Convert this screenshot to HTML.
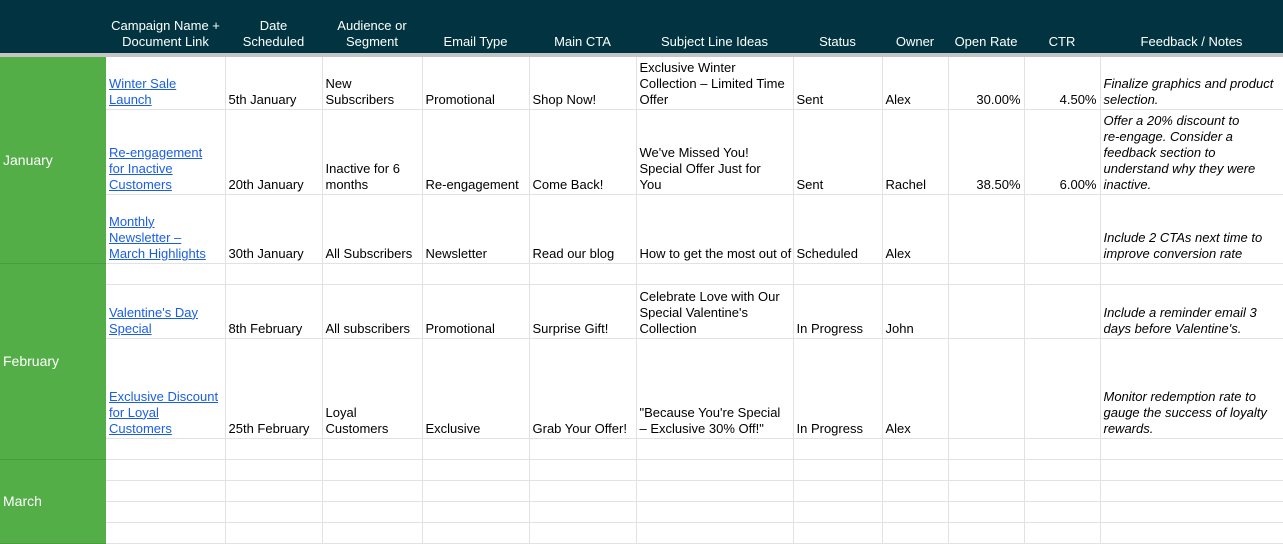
<!DOCTYPE html>
<html><head><meta charset="utf-8"><style>
*{margin:0;padding:0;box-sizing:border-box}
body{width:1283px;height:538px;overflow:hidden;background:#fff;font-family:"Liberation Sans",Arial,sans-serif;font-size:13px;color:#000;position:relative}
.hd{position:absolute;left:0;top:0;width:1283px;height:53px;background:#013440}
.hd div{position:absolute;bottom:3px;color:#fff;text-align:center;line-height:16px;white-space:nowrap}
.gl{position:absolute;left:0;top:53px;width:1283px;height:4px;background:#c4c4c4}
table{position:absolute;left:0;top:57px;border-collapse:collapse;table-layout:fixed;width:1283px}
td{border-right:1px solid #e2e2e2;border-bottom:1px solid #e2e2e2;vertical-align:bottom;padding:0 3px 1px 3px;line-height:16px;overflow:hidden;white-space:nowrap}
td.m{background:#53ae47;color:#fff;vertical-align:middle;padding:0 3px;border-right:none;border-bottom:1px solid #4a9a40;font-size:14px}
a{color:#1a5ee6;text-decoration:underline}
.r{text-align:right}
.i{font-style:italic}
</style></head><body>
<div class="hd">
<div style="left:106px;width:119px">Campaign Name +<br>Document Link</div>
<div style="left:225px;width:97px">Date<br>Scheduled</div>
<div style="left:322px;width:100px">Audience or<br>Segment</div>
<div style="left:422px;width:107px">Email Type</div>
<div style="left:529px;width:107px">Main CTA</div>
<div style="left:636px;width:157px">Subject Line Ideas</div>
<div style="left:793px;width:89px">Status</div>
<div style="left:882px;width:66px">Owner</div>
<div style="left:948px;width:76px">Open Rate</div>
<div style="left:1024px;width:76px">CTR</div>
<div style="left:1100px;width:183px">Feedback / Notes</div>
</div>
<div class="gl"></div>
<table>
<colgroup><col style="width:106px"><col style="width:119px"><col style="width:97px"><col style="width:100px"><col style="width:107px"><col style="width:107px"><col style="width:157px"><col style="width:89px"><col style="width:66px"><col style="width:76px"><col style="width:76px"><col style="width:183px"></colgroup>
<tr style="height:52px"><td class="m" rowspan="3">January</td><td><a>Winter Sale<br>Launch</a></td><td>5th January</td><td>New<br>Subscribers</td><td>Promotional</td><td>Shop Now!</td><td>Exclusive Winter<br>Collection – Limited Time<br>Offer</td><td>Sent</td><td>Alex</td><td class="r">30.00%</td><td class="r">4.50%</td><td class="i">Finalize graphics and product<br>selection.</td></tr>
<tr style="height:85px"><td><a>Re-engagement<br>for Inactive<br>Customers</a></td><td>20th January</td><td>Inactive for 6<br>months</td><td>Re-engagement</td><td>Come Back!</td><td>We've Missed You!<br>Special Offer Just for<br>You</td><td>Sent</td><td>Rachel</td><td class="r">38.50%</td><td class="r">6.00%</td><td class="i">Offer a 20% discount to<br>re-engage. Consider a<br>feedback section to<br>understand why they were<br>inactive.</td></tr>
<tr style="height:69px"><td><a>Monthly<br>Newsletter –<br>March Highlights</a></td><td>30th January</td><td>All Subscribers</td><td>Newsletter</td><td>Read our blog</td><td>How to get the most out of</td><td>Scheduled</td><td>Alex</td><td></td><td></td><td class="i">Include 2 CTAs next time to<br>improve conversion rate</td></tr>
<tr style="height:21px"><td class="m" rowspan="4">February</td><td></td><td></td><td></td><td></td><td></td><td></td><td></td><td></td><td></td><td></td><td></td></tr>
<tr style="height:54px"><td><a>Valentine's Day<br>Special</a></td><td>8th February</td><td>All subscribers</td><td>Promotional</td><td>Surprise Gift!</td><td>Celebrate Love with Our<br>Special Valentine's<br>Collection</td><td>In Progress</td><td>John</td><td></td><td></td><td class="i">Include a reminder email 3<br>days before Valentine's.</td></tr>
<tr style="height:100px"><td><a>Exclusive Discount<br>for Loyal<br>Customers</a></td><td>25th February</td><td>Loyal<br>Customers</td><td>Exclusive</td><td>Grab Your Offer!</td><td>"Because You're Special<br>– Exclusive 30% Off!"</td><td>In Progress</td><td>Alex</td><td></td><td></td><td class="i">Monitor redemption rate to<br>gauge the success of loyalty<br>rewards.</td></tr>
<tr style="height:21px"><td></td><td></td><td></td><td></td><td></td><td></td><td></td><td></td><td></td><td></td><td></td></tr>
<tr style="height:21px"><td class="m" rowspan="4">March</td><td></td><td></td><td></td><td></td><td></td><td></td><td></td><td></td><td></td><td></td><td></td></tr>
<tr style="height:21px"><td></td><td></td><td></td><td></td><td></td><td></td><td></td><td></td><td></td><td></td><td></td></tr>
<tr style="height:21px"><td></td><td></td><td></td><td></td><td></td><td></td><td></td><td></td><td></td><td></td><td></td></tr>
<tr style="height:21px"><td></td><td></td><td></td><td></td><td></td><td></td><td></td><td></td><td></td><td></td><td></td></tr>
</table>
</body></html>
